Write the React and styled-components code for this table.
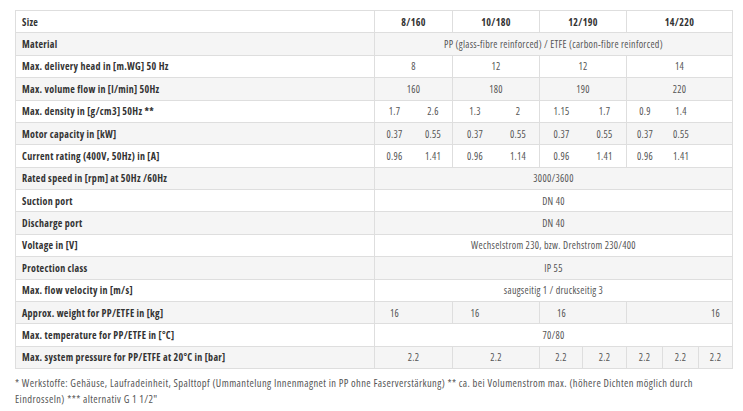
import styled, { createGlobalStyle } from 'styled-components';

const GlobalStyle = createGlobalStyle`
  body {
    margin: 0;
    background: #fff;
    font-family: "Open Sans", Roboto, sans-serif;
    font-stretch: 75%;
  }
`;

const colors = {
  border: '#dedede',
  stripe: '#f5f5f5',
  label: '#333',
  value: '#555',
};

const Page = styled.div`
  padding: 10px 0 0 15px;
`;

const Table = styled.div`
  display: grid;
  width: fit-content;
  grid-template-columns: 359px 39px 39px 44px 43px 43px 44px 36px 36px 34px;
  grid-auto-rows: 22.375px;
  border-top: 1px solid ${colors.border};
  border-left: 1px solid ${colors.border};
`;

const Cell = styled.div`
  box-sizing: border-box;
  grid-column: span ${(p) => p.$span || 1};
  display: flex;
  align-items: center;
  justify-content: ${(p) => (p.$label ? 'flex-start' : 'center')};
  padding: ${(p) => (p.$label ? '0 6px' : '0 2px')};
  background: ${(p) => (p.$shade ? colors.stripe : '#fff')};
  border-bottom: 1px solid ${colors.border};
  border-right: ${(p) => (p.$joined ? 'none' : `1px solid ${colors.border}`)};
  color: ${(p) => (p.$bold ? colors.label : colors.value)};
  font-weight: ${(p) => (p.$bold ? 700 : 400)};
  font-size: 10px;
  letter-spacing: 0.3px;
  white-space: nowrap;
`;

const Footnote = styled.p`
  margin: 6px 0 0;
  width: 718px;
  font-size: 10.5px;
  letter-spacing: 0.4px;
  line-height: 16px;
  color: #555;
`;

const sizes = (a, b, c, d) => [
  { t: a, span: 2 },
  { t: b, span: 2 },
  { t: c, span: 2 },
  { t: d, span: 3 },
];

const pairs = (vals) => [
  { t: vals[0], joined: true },
  { t: vals[1] },
  { t: vals[2], joined: true },
  { t: vals[3] },
  { t: vals[4], joined: true },
  { t: vals[5] },
  { t: vals[6], joined: true },
  { t: vals[7], joined: true },
  { t: '' },
];

const full = (t) => [{ t, span: 9 }];

const rows = [
  { label: 'Size', head: true, cells: sizes('8/160', '10/180', '12/190', '14/220') },
  { label: 'Material', cells: full('PP (glass-fibre reinforced) / ETFE (carbon-fibre reinforced)') },
  { label: 'Max. delivery head in [m.WG] 50 Hz', cells: sizes('8', '12', '12', '14') },
  { label: 'Max. volume flow in [l/min] 50Hz', cells: sizes('160', '180', '190', '220') },
  { label: 'Max. density in [g/cm3] 50Hz **', cells: pairs(['1.7', '2.6', '1.3', '2', '1.15', '1.7', '0.9', '1.4']) },
  { label: 'Motor capacity in [kW]', cells: pairs(['0.37', '0.55', '0.37', '0.55', '0.37', '0.55', '0.37', '0.55']) },
  { label: 'Current rating (400V, 50Hz) in [A]', cells: pairs(['0.96', '1.41', '0.96', '1.14', '0.96', '1.41', '0.96', '1.41']) },
  { label: 'Rated speed in [rpm] at 50Hz /60Hz', cells: full('3000/3600') },
  { label: 'Suction port', cells: full('DN 40') },
  { label: 'Discharge port', cells: full('DN 40') },
  { label: 'Voltage in [V]', cells: full('Wechselstrom 230, bzw. Drehstrom 230/400') },
  { label: 'Protection class', cells: full('IP 55') },
  { label: 'Max. flow velocity in [m/s]', cells: full('saugseitig 1 / druckseitig 3') },
  {
    label: 'Approx. weight for PP/ETFE in [kg]',
    cells: [
      { t: '16', joined: true },
      { t: '' },
      { t: '16', joined: true },
      { t: '' },
      { t: '16', joined: true },
      { t: '' },
      { t: '', joined: true },
      { t: '', joined: true },
      { t: '16' },
    ],
  },
  { label: 'Max. temperature for PP/ETFE in [°C]', cells: full('70/80') },
  {
    label: 'Max. system pressure for PP/ETFE at 20°C in [bar]',
    cells: [
      { t: '2.2', span: 2 },
      { t: '2.2', span: 2 },
      { t: '2.2' },
      { t: '2.2' },
      { t: '2.2' },
      { t: '2.2' },
      { t: '2.2' },
    ],
  },
];

export default function App() {
  return (
    <Page>
      <GlobalStyle />
      <Table>
        {rows.map((row, i) => {
          const shade = i % 2 === 1;
          return [
            <Cell key={`l${i}`} $label $bold $shade={shade}>
              {row.label}
            </Cell>,
            ...row.cells.map((c, j) => (
              <Cell
                key={`c${i}-${j}`}
                $span={c.span}
                $joined={c.joined}
                $shade={shade}
                $bold={row.head}
              >
                {c.t}
              </Cell>
            )),
          ];
        })}
      </Table>
      <Footnote>
        * Werkstoffe: Gehäuse, Laufradeinheit, Spalttopf (Ummantelung Innenmagnet in PP ohne
        Faserverstärkung) ** ca. bei Volumenstrom max. (höhere Dichten möglich durch Eindrosseln)
        *** alternativ G 1 1/2"
      </Footnote>
    </Page>
  );
}
